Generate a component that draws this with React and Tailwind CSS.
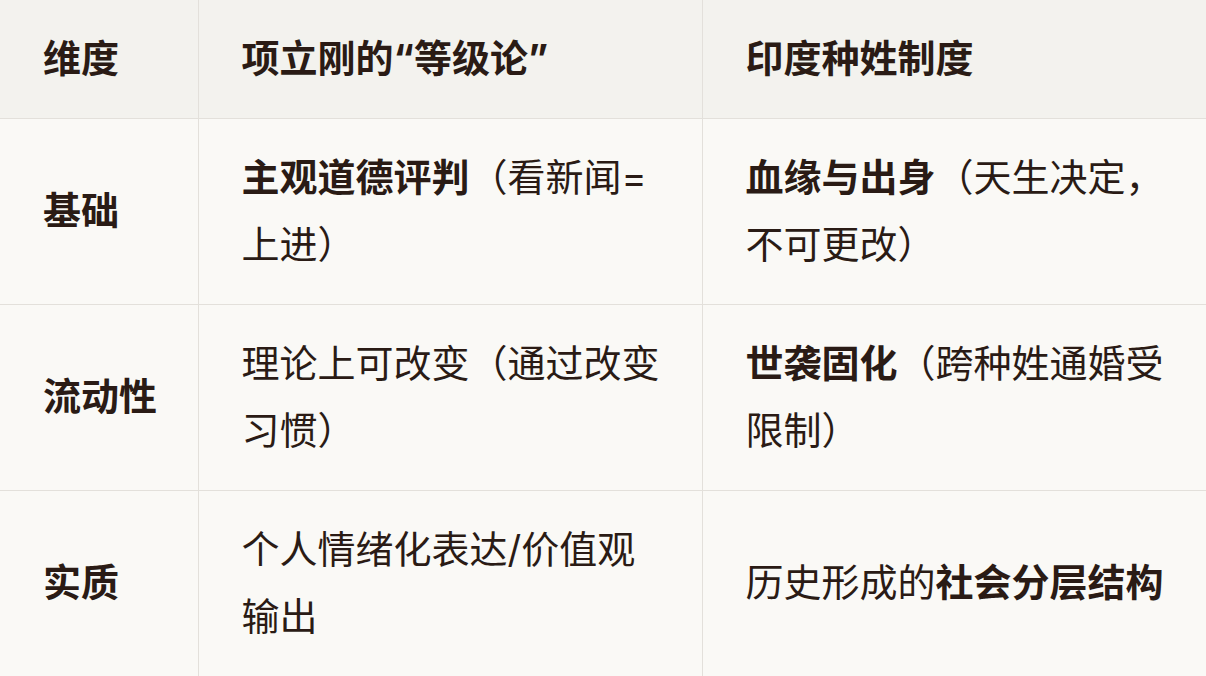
export default function App() {
  const rows = [
    {
      k: "基础",
      a: [<strong key="1" className="font-bold">主观道德评判</strong>, "（看新闻=上进）"],
      b: [<strong key="1" className="font-bold">血缘与出身</strong>, "（天生决定，不可更改）"],
    },
    {
      k: "流动性",
      a: ["理论上可改变（通过改变习惯）"],
      b: [<strong key="1" className="font-bold">世袭固化</strong>, "（跨种姓通婚受限制）"],
    },
    {
      k: "实质",
      a: ["个人情绪化表达/价值观输出"],
      b: ["历史形成的", <strong key="1" className="font-bold">社会分层结构</strong>],
    },
  ];
  const font = { fontFamily: 'Inter, "Noto Sans CJK SC", sans-serif' };
  return (
    <div className="w-[1206px] h-[676px] overflow-hidden bg-[#faf9f6] text-[#2a1b15]" style={font}>
      <table className="w-[1206px] border-collapse table-fixed text-[38px] leading-[67.5px]">
        <colgroup>
          <col className="w-[198px]" />
          <col className="w-[504px]" />
          <col className="w-[504px]" />
        </colgroup>
        <thead>
          <tr className="bg-[#f3f2ee]">
            <th className="text-left font-bold pl-[43px] pr-[20px] py-[25px] border-b border-r border-[#e3e0db]">维度</th>
            <th className="text-left font-bold pl-[43px] pr-[36px] py-[25px] border-b border-r border-[#e3e0db]">项立刚的“等级论”</th>
            <th className="text-left font-bold pl-[43px] pr-[36px] py-[25px] border-b border-[#e3e0db]">印度种姓制度</th>
          </tr>
        </thead>
        <tbody>
          {rows.map((r, i) => (
            <tr key={i} className="bg-[#faf9f6]">
              <td className="align-middle font-bold pl-[43px] pr-[20px] py-[25px] border-b border-r border-[#e3e0db]">{r.k}</td>
              <td className="align-middle pl-[43px] pr-[36px] py-[25px] border-b border-r border-[#e3e0db]">{r.a}</td>
              <td className="align-middle pl-[43px] pr-[36px] py-[25px] border-b border-[#e3e0db]">{r.b}</td>
            </tr>
          ))}
        </tbody>
      </table>
    </div>
  );
}
